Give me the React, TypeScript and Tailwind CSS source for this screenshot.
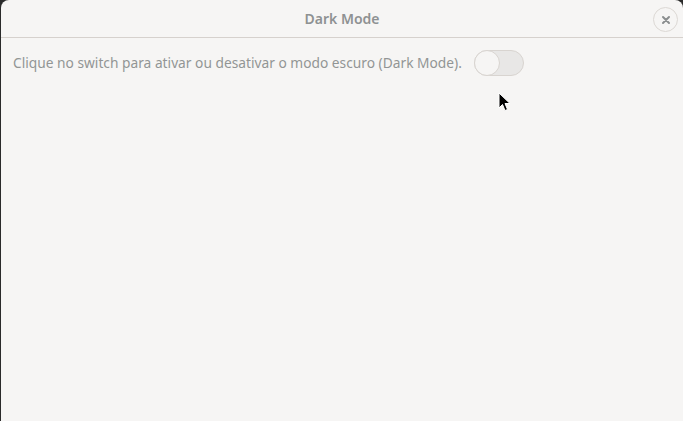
import React from "react";

export default function App() {
  return (
    <div className="w-[683px] h-[421px] bg-[#2a2a2a] relative overflow-hidden" style={{ fontFamily: '"Noto Sans", "DejaVu Sans", sans-serif' }}>
      <div className="absolute left-[1px] top-0 right-0 bottom-0 bg-[#f6f5f4] rounded-t-[8px] flex flex-col">
        <div className="h-[38px] border-b border-[#d6d1cd] flex items-center justify-center relative shrink-0">
          <span className="text-[14px] font-semibold text-[#8e9192]">Dark Mode</span>
          <div className="absolute right-[5px] top-[7px] w-[25px] h-[25px] rounded-full border border-[#dcd8d4] flex items-center justify-center">
            <svg width="10" height="10" viewBox="0 0 10 10">
              <path d="M2 2 L8 8 M8 2 L2 8" stroke="#8b8e8f" strokeWidth="2" strokeLinecap="round" />
            </svg>
          </div>
        </div>
        <div className="flex items-center pl-[12px] pt-[12px] gap-[12px]">
          <span className="text-[13.75px] text-[#929595]">Clique no switch para ativar ou desativar o modo escuro (Dark Mode).</span>
          <div className="w-[50px] h-[26px] rounded-full bg-[#e8e7e6] border border-[#d8d4d0] relative">
            <div className="absolute left-[-1px] top-[-1px] w-[26px] h-[26px] rounded-full bg-[#f6f5f4] border border-[#d8d4d0]" />
          </div>
        </div>
      </div>
      <svg className="absolute left-[498px] top-[92px]" width="14" height="20" viewBox="0 0 14 20">
        <path d="M1 1 L1 16 L4.5 12.5 L7 18.5 L9.5 17.5 L7 11.5 L12 11.5 Z" fill="#000" stroke="#fff" strokeWidth="1" />
      </svg>
    </div>
  );
}
